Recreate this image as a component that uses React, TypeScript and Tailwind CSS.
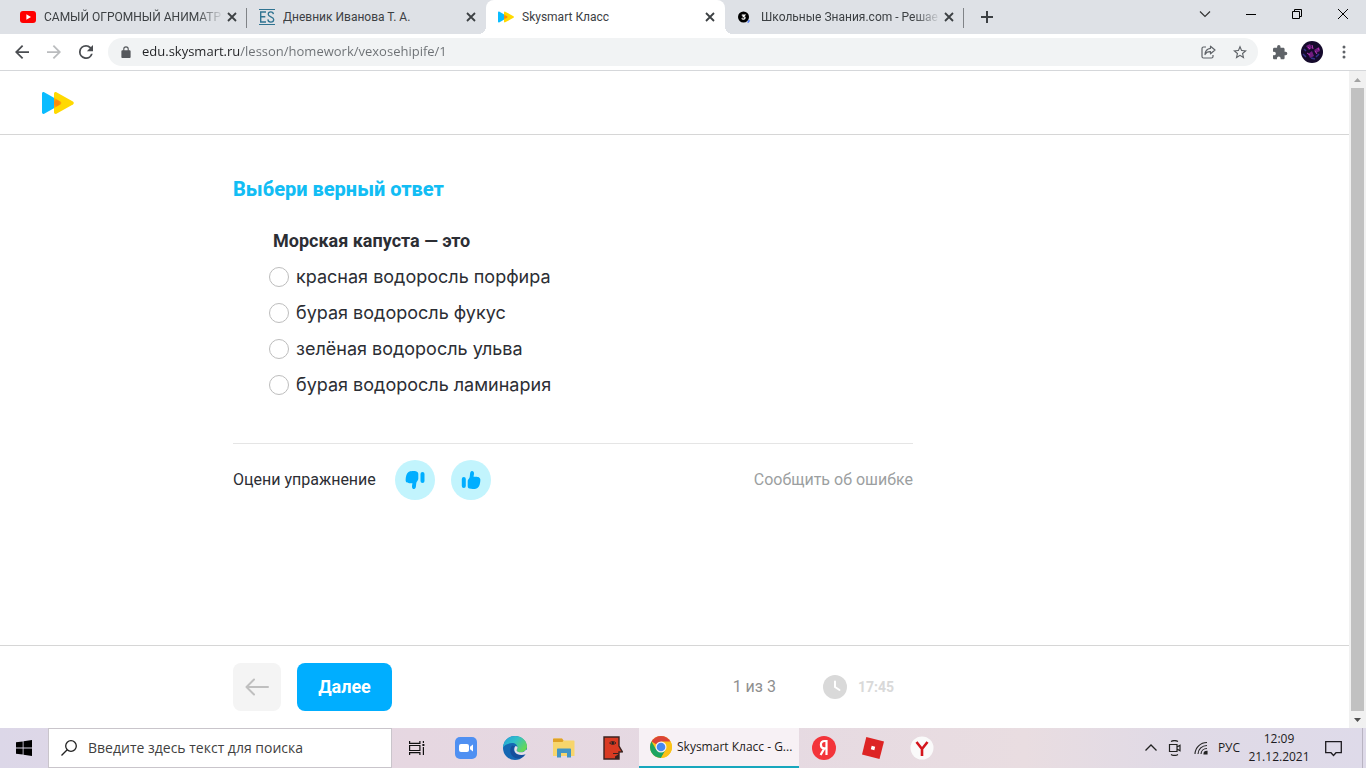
import { useState } from 'react'
import type { ReactNode } from 'react'
import { clsx } from 'clsx'

type Tab = {
  id: string
  title: string
  icon: ReactNode
  fade?: boolean
}

const answers = [
  'красная водоросль порфира',
  'бурая водоросль фукус',
  'зелёная водоросль ульва',
  'бурая водоросль ламинария',
]

function YoutubeIcon() {
  return (
    <svg viewBox="0 0 16 16" className="size-4">
      <rect y="2" width="16" height="12" rx="3" fill="#f00" />
      <path d="M6.4 5.2v5.6L11 8z" fill="#fff" />
    </svg>
  )
}

function DiaryIcon() {
  return (
    <svg viewBox="0 0 16 16" className="size-4" stroke="#2f7391" fill="none">
      <path d="M0 .5h16M0 15.5h16" />
      <path d="M7 3H1.7v10H7M1.7 7.8h4.6" strokeWidth="1.4" />
      <path d="M14.4 5.2C14.2 3.6 13.2 2.9 11.8 2.9c-1.5 0-2.6.9-2.6 2.3 0 3 5.5 2.2 5.5 5.3 0 1.6-1.2 2.6-2.9 2.6-1.7 0-2.8-.9-2.9-2.7" strokeWidth="1.3" />
    </svg>
  )
}

function SkysmartLogo({ className }: { className: string }) {
  return (
    <svg viewBox="0 0 32 22" className={className}>
      <defs>
        <radialGradient id="overlap" cx="15" cy="11" r="8" gradientUnits="userSpaceOnUse">
          <stop offset="0.25" stopColor="#f98a0c" />
          <stop offset="1" stopColor="#ffd900" />
        </radialGradient>
      </defs>
      <path d="M0 1.5C0 .3 1.2-.3 2.2.2L18.500 9.500c1.200.7 1.200 2.300 0 3L2.200 21.800C1.200 22.300 0 21.700 0 20.500z" fill="#0abcff" />
      <path d="M12 1.7C12 .4 13.300-.3 14.400.3l16.500 9.200c1.200.7 1.200 2.300 0 3L14.400 21.700C13.300 22.300 12 21.600 12 20.300z" fill="#ffd900" />
      <path d="M12 5.800l6.500 3.700c1.200.7 1.200 2.300 0 3L12 16.200z" fill="url(#overlap)" />
    </svg>
  )
}

function ZnanijaIcon() {
  return (
    <svg viewBox="0 0 16 16" className="size-4">
      <circle cx="6.500" cy="8" r="5.500" fill="#000" />
      <path d="M4.800 6.100h3L6.300 7.600c2.600 0 2.100 2.700 0 2.500-.7 0-1.200-.3-1.600-.8" fill="none" stroke="#fff" strokeWidth="1.2" />
      <path d="M11.500 10.500l1.700 1.200-1.800 2.300-1.200-.6z" fill="#5b83f0" />
    </svg>
  )
}

const tabs: Tab[] = [
  { id: 'youtube', title: 'САМЫЙ ОГРОМНЫЙ АНИМАТР', icon: <YoutubeIcon />, fade: true },
  { id: 'diary', title: 'Дневник Иванова Т. А.', icon: <DiaryIcon /> },
  { id: 'skysmart', title: 'Skysmart Класс', icon: <SkysmartLogo className="h-3 w-4" /> },
  { id: 'znanija', title: 'Школьные Знания.com - Решае', icon: <ZnanijaIcon />, fade: true },
]

function TabStrip() {
  const [active, setActive] = useState('skysmart')

  return (
    <div className="flex h-[34px] bg-[#dee1e6] pl-2 text-[#3c4043]">
      <div className="flex min-w-0">
        {tabs.map((tab, i) => {
          const isActive = tab.id === active
          const divider = !isActive && tabs[i + 1]?.id !== active
          return (
            <div
              key={tab.id}
              className={clsx(
                'relative flex w-[239px] min-w-0 items-center pr-[7px] pl-3',
                isActive && 'rounded-t-lg bg-white',
              )}
            >
              {isActive && (
                <>
                  <span className="absolute bottom-0 -left-2 size-2 bg-[radial-gradient(circle_at_0_0,#dee1e6_8px,#fff_8px)]" />
                  <span className="absolute -right-2 bottom-0 size-2 bg-[radial-gradient(circle_at_100%_0,#dee1e6_8px,#fff_8px)]" />
                </>
              )}
              <span className="flex size-4 shrink-0 items-center justify-center">{tab.icon}</span>
              <button
                onClick={() => setActive(tab.id)}
                className={clsx(
                  "ml-2 min-w-0 flex-1 overflow-hidden text-left font-['Roboto',sans-serif] text-xs whitespace-nowrap",
                  tab.fade && 'mask-r-from-85%',
                )}
              >
                {tab.title}
              </button>
              <button aria-label="Закрыть вкладку" className="flex size-4 shrink-0 items-center justify-center">
                <svg viewBox="0 0 10 10" className="size-[10px]" stroke="#3c4043" strokeWidth="1.8">
                  <path d="M1 1l8 8M9 1L1 9" />
                </svg>
              </button>
              {divider && <span className="absolute top-2 right-0 h-5 w-px bg-[#808387]" />}
            </div>
          )
        })}
      </div>
      <button aria-label="Новая вкладка" className="flex w-[46px] items-center justify-center">
        <svg viewBox="0 0 12 12" className="size-3" stroke="#3c4043" strokeWidth="2">
          <path d="M6 0v12M0 6h12" />
        </svg>
      </button>
      <div className="ml-auto flex h-7 [&>button]:flex [&>button]:w-[46px] [&>button]:items-center [&>button]:justify-center">
        <button aria-label="Поиск вкладок">
          <svg viewBox="0 0 12 12" className="size-3" fill="none" stroke="#333" strokeWidth="1.2">
            <path d="M1 3.500l5 5 5-5" />
          </svg>
        </button>
        <button aria-label="Свернуть">
          <svg viewBox="0 0 10 10" className="size-[10px]" stroke="#000">
            <path d="M0 5.500h10" />
          </svg>
        </button>
        <button aria-label="Восстановить">
          <svg viewBox="0 0 10 10" className="size-[10px]" fill="none" stroke="#000">
            <path d="M.5 2.500h7v7h-7zM2.500 2.500v-2h7v7h-2" />
          </svg>
        </button>
        <button aria-label="Закрыть">
          <svg viewBox="0 0 10 10" className="size-[10px]" stroke="#000">
            <path d="M0 0l10 10M10 0L0 10" />
          </svg>
        </button>
      </div>
    </div>
  )
}

function Toolbar() {
  return (
    <div className="flex h-[37px] items-center border-b border-[#d5d7da] bg-white px-[6px] [&_button]:flex [&_button]:w-8 [&_button]:shrink-0 [&_button]:items-center [&_button]:justify-center">
      <button aria-label="Назад">
        <svg viewBox="4 4 16 16" className="size-[14px]" fill="#4a4d51">
          <path d="M20 11H7.830l5.590-5.590L12 4l-8 8 8 8 1.410-1.410L7.830 13H20z" />
        </svg>
      </button>
      <button aria-label="Вперёд">
        <svg viewBox="4 4 16 16" className="size-[14px]" fill="#babcbe">
          <path d="M12 4l-1.410 1.410L16.170 11H4v2h12.170l-5.580 5.590L12 20l8-8z" />
        </svg>
      </button>
      <button aria-label="Обновить">
        <svg viewBox="4 4 16 16" className="size-[14px]" fill="#4a4d51">
          <path d="M17.650 6.350A7.960 7.960 0 0 0 12 4a8 8 0 1 0 7.730 10h-2.080A6 6 0 1 1 12 6c1.660 0 3.140.69 4.220 1.780L13 11h7V4z" />
        </svg>
      </button>
      <div className="ml-[6px] flex h-7 flex-1 items-center rounded-full bg-[#f1f3f4] pr-[2px] pl-[13px]">
        <svg viewBox="0 0 10 13" className="h-3 w-[10px] shrink-0" fill="#55585c">
          <path d="M1.200 4.600H2V3.300a3 3 0 0 1 6 0v1.300h.8c.7 0 1.200.5 1.200 1.200v6c0 .7-.5 1.200-1.200 1.200H1.200C.5 13 0 12.500 0 11.800v-6c0-.7.5-1.200 1.200-1.200zm2 0h3.600V3.300a1.800 1.800 0 0 0-3.600 0z" />
        </svg>
        <input
          aria-label="Адресная строка"
          defaultValue="edu.skysmart.ru/lesson/homework/vexosehipife/1"
          className="ml-[11px] min-w-0 flex-1 bg-[linear-gradient(to_right,#202124_97px,#6b6f73_97px)] bg-clip-text text-[13px] text-transparent outline-none"
        />
        <button aria-label="Поделиться">
          <svg viewBox="0 0 16 16" className="size-4" fill="none" stroke="#5f6368" strokeWidth="1.2" strokeLinejoin="round">
            <path d="M6 3H3.500C2.500 3 2 3.500 2 4.500v8c0 1 .5 1.500 1.500 1.500h8c1 0 1.500-.5 1.500-1.500V11" />
            <path d="M10.500 2.200L15 6l-4.500 3.800V7.700C7.500 7.600 6 8.600 5 10.500c.2-3.500 2-5.800 5.500-6.200z" />
          </svg>
        </button>
        <button aria-label="Добавить в закладки">
          <svg viewBox="2 2 20 19" className="size-[14px]" fill="#5f6368">
            <path d="M22 9.240l-7.190-.62L12 2 9.190 8.630 2 9.240l5.460 4.730L5.820 21 12 17.270 18.180 21l-1.630-7.030zM12 15.400l-3.760 2.270 1-4.280-3.320-2.880 4.380-.38L12 6.100l1.710 4.040 4.380.38-3.320 2.880 1 4.280z" />
          </svg>
        </button>
      </div>
      <div className="ml-[6px] flex items-center">
        <button aria-label="Расширения">
          <svg viewBox="2 1 22 22" className="size-[15px]" fill="#5f6368">
            <path d="M20.500 11H19V7c0-1.100-.9-2-2-2h-4V3.500a2.500 2.500 0 0 0-5 0V5H4c-1.100 0-2 .9-2 2v3.800h1.500a2.700 2.700 0 0 1 0 5.400H2V20c0 1.100.9 2 2 2h3.800v-1.500a2.700 2.700 0 0 1 5.400 0V22H17c1.100 0 2-.9 2-2v-4h1.500a2.500 2.500 0 0 0 0-5z" />
          </svg>
        </button>
        <button aria-label="Профиль">
          <svg viewBox="0 0 22 22" className="size-[22px] rounded-full">
            <rect width="22" height="22" fill="#150a2c" />
            <path d="M5 5l4-2 2 4-3 2zM13 9l5-3 1 4-4 2zM7 13l4-3 2 5-4 2z" fill="#701b80" />
            <path d="M7 6l2 2M11 4l1 4M14 10l2 3M6 12l3 2M17 7l1 2" stroke="#ba3bb7" />
            <path d="M2 13l3 3M10 17l4 1M15 16l3-3M3 8l2 2" stroke="#35328b" strokeWidth="1.5" />
          </svg>
        </button>
        <button aria-label="Меню">
          <svg viewBox="0 0 4 14" className="h-[14px] w-1" fill="#5f6368">
            <circle cx="2" cy="2" r="1.5" />
            <circle cx="2" cy="7" r="1.5" />
            <circle cx="2" cy="12" r="1.5" />
          </svg>
        </button>
      </div>
    </div>
  )
}

function Exercise() {
  const [answer, setAnswer] = useState<string | null>(null)

  return (
    <main className="flex-1 pt-10 pl-[233px] text-[#2c2e34]">
      <div className="max-w-[680px]">
        <h1 className="text-xl leading-7 font-extrabold text-[#12bdf4]">Выбери верный ответ</h1>
        <fieldset className="mt-6 pl-9">
          <legend className="pl-1 text-lg leading-7 font-bold">Морская капуста — это</legend>
          <div className="mt-2 flex flex-col gap-2">
            {answers.map((text) => (
              <label key={text} className="flex items-center gap-[7px] font-['Inter',sans-serif] text-lg leading-7">
                <input
                  type="radio"
                  name="answer"
                  checked={answer === text}
                  onChange={() => setAnswer(text)}
                  className="size-5 appearance-none rounded-full border border-[#bdbdbd] bg-white checked:border-[6px] checked:border-[#00aeff]"
                />
                {text}
              </label>
            ))}
          </div>
        </fieldset>
        <div className="mt-11 flex items-center border-t border-[#e5e5e5] pt-4">
          <span className="text-base">Оцени упражнение</span>
          <div className="ml-[19px] flex gap-4">
            <button aria-label="Не нравится" className="flex size-10 items-center justify-center rounded-full bg-[#c2f4fd]">
              <svg viewBox="0 0 20 20" className="size-5" fill="#00aeff">
                <path d="M4.500 1.500C6 .9 9.500.7 11.500 1.400c1.300.4 1.800 1.200 1.800 2.600v4.600c0 1.200-.5 2-1.300 2.900-.8 1-.8 2.300-1 4.200-.1 1.800-.6 3.300-2 3.300-1.500 0-2-1.200-2-2.600 0-1.300.5-2.400.4-3.100-1.700 0-4.100.3-5.500-.7C.6 11.700.5 10.600.7 9c.3-3 1-6.400 3.800-7.500z" />
                <rect x="15.500" y="2" width="4" height="11" rx="2" />
              </svg>
            </button>
            <button aria-label="Нравится" className="flex size-10 items-center justify-center rounded-full bg-[#c2f4fd]">
              <svg viewBox="0 0 20 20" className="size-5" fill="#00aeff">
                <path d="M15.500 18.500c-1.500.6-5 .8-7 .1-1.300-.4-1.800-1.200-1.800-2.600v-4.600c0-1.200.5-2 1.300-2.900.8-1 .8-2.300 1-4.200.1-1.800.6-3.300 2-3.300 1.500 0 2 1.200 2 2.600 0 1.300-.5 2.400-.4 3.100 1.700 0 4.100-.3 5.500.7 1.300.9 1.400 2 1.200 3.600-.3 3-1 6.400-3.800 7.500z" />
                <rect x=".8" y="7" width="4" height="11" rx="2" />
              </svg>
            </button>
          </div>
          <a href="#report" className="ml-auto text-base text-[#9c9fa1]">
            Сообщить об ошибке
          </a>
        </div>
      </div>
    </main>
  )
}

function LessonFooter() {
  return (
    <footer className="border-t border-[#d6d6d6] py-[17px] pl-[233px]">
      <div className="flex max-w-[661px] items-center">
        <button aria-label="Предыдущее задание" className="flex size-12 items-center justify-center rounded-lg bg-[#f4f4f4]">
          <svg viewBox="0 0 24 18" className="h-[18px] w-6" fill="none" stroke="#bfbfbf" strokeWidth="2" strokeLinecap="round" strokeLinejoin="round">
            <path d="M23 9H1.500M9 1.500L1.500 9 9 16.500" />
          </svg>
        </button>
        <button className="ml-4 h-12 w-[95px] rounded-lg bg-[#00aeff] text-lg font-bold text-white">Далее</button>
        <span className="ml-auto text-base text-[#8f8f8f]">1 из 3</span>
        <svg viewBox="0 0 24 24" className="ml-[47px] size-6">
          <circle cx="12" cy="12" r="12" fill="#d9d9d9" />
          <path d="M12 6.500V12l4.500 3" fill="none" stroke="#fff" strokeWidth="2" strokeLinecap="round" />
        </svg>
        <span className="ml-[11px] text-sm font-bold text-[#d9d9d9]">17:45</span>
      </div>
    </footer>
  )
}

function Scrollbar() {
  return (
    <div className="flex w-[17px] shrink-0 flex-col items-center bg-[#f1f1f1]">
      <svg viewBox="0 0 17 17" className="size-[17px] shrink-0">
        <path d="M5 11h7L8.500 7z" fill="#a3a3a3" />
      </svg>
      <div className="w-[13px] flex-1 bg-[#c1c1c1]" />
      <svg viewBox="0 0 17 17" className="size-[17px] shrink-0">
        <path d="M5 7h7l-3.500 4z" fill="#505050" />
      </svg>
    </div>
  )
}

function ChromeIcon() {
  return (
    <svg viewBox="0 0 24 24" className="size-[22px]">
      <circle cx="12" cy="12" r="12" fill="#fbc116" />
      <path d="M12 12L1.610 6A12 12 0 0 1 22.390 6z" fill="#db4437" />
      <path d="M1.610 6A12 12 0 0 0 12 24l5.200-9L12 12 6.800 15z" fill="#1da462" />
      <path d="M12 6h10.390A12 12 0 0 1 12 24l5.200-9z" fill="#fbc116" />
      <circle cx="12" cy="12" r="6" fill="#f6f1f4" />
      <circle cx="12" cy="12" r="4.7" fill="#4688f1" />
    </svg>
  )
}

const pinnedApps = [
  {
    name: 'Представление задач',
    icon: (
      <svg viewBox="0 0 16 16" className="size-4" fill="none" stroke="#111" strokeWidth="1.2">
        <path d="M.6 1v2.400h10.300V1M.6 15v-2.400h10.300V15M.6 5.500h10.300v5H.6zM14.400 1v2M14.400 7v8" />
        <path d="M13.400 4h2v2h-2z" fill="#111" stroke="none" />
      </svg>
    ),
  },
  {
    name: 'Zoom',
    icon: (
      <svg viewBox="0 0 22 22" className="size-[22px]">
        <rect width="22" height="22" rx="5" fill="#4f90f2" />
        <rect x="4" y="7" width="10" height="8" rx="2" fill="#fff" />
        <path d="M15 9.800L18 7.500v7l-3-2.300z" fill="#fff" />
      </svg>
    ),
  },
  {
    name: 'Edge',
    icon: (
      <svg viewBox="0 0 24 24" className="size-6">
        <defs>
          <linearGradient id="edge-top" x1="0" y1="0" x2="1" y2="0.6">
            <stop offset="0" stopColor="#229fdb" />
            <stop offset="0.5" stopColor="#31bfc9" />
            <stop offset="1" stopColor="#65d857" />
          </linearGradient>
        </defs>
        <circle cx="12" cy="12" r="12" fill="#1568b3" />
        <path d="M0 11.500C.5 4.700 5.600 0 12 0c7 0 12 5 12 10.300 0 3.500-2.700 6-6.100 6-2.400 0-4.300-1-4.300-2.100 0-.7.9-1 .9-2.800 0-2.300-2.300-4.400-5.400-4.400C5.500 7 1.600 9 0 11.500z" fill="url(#edge-top)" />
        <path d="M9.200 9.500C6.500 12.300 6.600 17.500 10 20.500c2 2 5.500 2.500 8.300 1.200 2-.9 3.400-2.400 4.200-3.800-3.500 1.900-8.500 1.600-10.800-1.500-1.700-2.300-1.400-4.600 0-6.200z" fill="#164f9c" />
        <path d="M14.500 11.400c0 1.800-.9 2.100-.9 2.800 0 1.100 1.900 2.100 4.300 2.100 2.200 0 4-.9 5.100-2.600h1.200c0 1.700-.6 3.300-1.600 4.500-3.900 1.300-8.600.8-10.500-2-1.400-2.200-1-4.500.4-6.100.8.200 2.100.4 2.100 1.300z" fill="#e7dfe8" />
      </svg>
    ),
  },
  {
    name: 'Проводник',
    icon: (
      <svg viewBox="0 0 24 20" className="h-5 w-6">
        <path d="M1 1.500C1 .7 1.500.5 2 .5h8l1.500 2h10c.7 0 1 .4 1 1V18H1z" fill="#f7d56c" />
        <path d="M1 1.500C1 .7 1.500.5 2 .5h8l1.500 2-1 1.500H1z" fill="#dfa126" />
        <path d="M5 19.500v-8c0-.6.4-1 1-1h12c.6 0 1 .4 1 1v8h-4v-4.500H9v4.500z" fill="#4295c4" />
      </svg>
    ),
  },
  {
    name: 'Лицо',
    icon: (
      <svg viewBox="0 0 20 24" className="h-6 w-5">
        <path d="M1 1h15v9l3.300 5.800-3.300.2V23H1z" fill="#d93a22" stroke="#3b2320" strokeWidth="1.4" />
        <path d="M6.500 7c2-2 4.500-2 6.500 0-2 1.800-4.500 1.800-6.500 0zM10 17.500h5.500" fill="none" stroke="#3b2320" />
        <circle cx="9.800" cy="7" r="1.200" fill="#222" />
        <path d="M12 20.500l4-2.500v5h-4z" fill="#3b2320" />
      </svg>
    ),
  },
]

const runningApps = [
  {
    name: 'Яндекс',
    icon: (
      <svg viewBox="0 0 24 24" className="size-6">
        <circle cx="12" cy="12" r="12" fill="#f3343a" />
        <path d="M14.500 19V5h-1.800c-2.600 0-3.800 1.500-3.800 3.800 0 2.200 1.300 3.600 3.500 3.600h2M12.300 12.400L8.600 19" fill="none" stroke="#fff" strokeWidth="2.2" />
      </svg>
    ),
  },
  {
    name: 'Roblox',
    icon: (
      <svg viewBox="0 0 24 24" className="size-6">
        <path d="M5.300 1L23 5.500 18.500 23 1 18.500z" fill="#dd2424" />
        <path d="M10.700 9.800l3.500.9-.9 3.500-3.500-.9z" fill="#fff" />
      </svg>
    ),
  },
  {
    name: 'Яндекс Браузер',
    icon: (
      <svg viewBox="0 0 24 24" className="size-6">
        <circle cx="12" cy="12" r="11.5" fill="#fafafa" />
        <path d="M6.500 6l5.500 7 5.500-7M12 12.500V20" fill="none" stroke="#d4151c" strokeWidth="2.6" />
      </svg>
    ),
  },
]

function Taskbar() {
  return (
    <div className="flex h-10 shrink-0 items-stretch bg-[linear-gradient(to_right,#dcd7e8,#e6d7e1_30%,#e5d9e2_52%,#e9dde1_75%,#e0dae6_86%,#dedae9)] font-['Open_Sans',sans-serif] text-[#1d1b20]">
      <button aria-label="Пуск" className="flex w-12 items-center justify-center">
        <svg viewBox="0 0 16 16" className="size-4" fill="#000">
          <path d="M0 2.300l6.700-.9v6.200H0zM7.500 1.300L16 0v7.600H7.500zM0 8.400h6.700v6.200L0 13.700zM7.500 8.400H16V16l-8.500-1.200z" />
        </svg>
      </button>
      <label className="flex w-[344px] items-center border border-[#c9c5cb] bg-white pl-3">
        <svg viewBox="0 0 16 16" className="size-4 shrink-0" fill="none" stroke="#222" strokeWidth="1.3">
          <circle cx="10" cy="6" r="5.3" />
          <path d="M6.200 9.800L.5 15.500" />
        </svg>
        <input
          aria-label="Поиск"
          placeholder="Введите здесь текст для поиска"
          className="ml-[11px] min-w-0 flex-1 text-sm outline-none placeholder:text-[#3f3f3f]"
        />
      </label>
      {pinnedApps.map((app) => (
        <button key={app.name} aria-label={app.name} className="flex w-[49px] items-center justify-center">
          {app.icon}
        </button>
      ))}
      <button className="ml-[2px] flex w-40 items-center gap-[5px] border-b-2 border-[#17a7bd] bg-[#f7f1f5] pl-[11px] text-xs whitespace-nowrap">
        <ChromeIcon />
        Skysmart Класс - G...
      </button>
      {runningApps.map((app) => (
        <button key={app.name} aria-label={app.name} className="flex w-[49px] items-center justify-center">
          {app.icon}
        </button>
      ))}
      <div className="ml-auto flex items-center text-xs">
        <button aria-label="Скрытые значки" className="flex w-6 justify-center">
          <svg viewBox="0 0 12 12" className="size-3" fill="none" stroke="#222" strokeWidth="1.3">
            <path d="M.5 8.500L6 3l5.500 5.500" />
          </svg>
        </button>
        <button aria-label="Камера" className="flex w-6 justify-center">
          <svg viewBox="0 0 14 16" className="h-4 w-[14px]" fill="none" stroke="#222" strokeWidth="1.2">
            <path d="M3 1.500C5 .4 8 .4 10 1.500M3 14.500c2 1.100 5 1.100 7 0M1.500 4.500H9v7H1.500zM9 7l3-1.700v5.400L9 9" />
          </svg>
        </button>
        <button aria-label="Сеть" className="flex w-7 justify-center">
          <svg viewBox="0 0 14 14" className="size-[14px]" fill="none" stroke="#222" strokeWidth="1.1">
            <path d="M1 13C1.200 6.500 6.500 1.500 13 1.500M4 13c.2-4.800 4-8.500 9-8.500M7 13c.1-3.200 2.600-5.500 6-5.500" />
            <path d="M10 13c0-1.600 1.300-2.600 3-2.600V13z" fill="#222" />
          </svg>
        </button>
        <button className="w-7">РУС</button>
        <div className="ml-1 w-16 text-center leading-[18px]">
          <div>12:09</div>
          <div>21.12.2021</div>
        </div>
        <button aria-label="Уведомления" className="ml-[14px] flex w-[17px] justify-center">
          <svg viewBox="0 0 17 17" className="size-[17px]" fill="none" stroke="#1d1b20" strokeWidth="1.3">
            <path d="M.7 1.700h15.600v11H11L8.500 15.500 6 12.700H.7z" />
          </svg>
        </button>
        <div className="ml-5 h-10 w-1 border-l border-[#b9b4c2]" />
      </div>
    </div>
  )
}

export default function App() {
  return (
    <div className="flex h-screen flex-col overflow-hidden bg-white">
      <div className="shrink-0 font-['Open_Sans',sans-serif]">
        <TabStrip />
        <Toolbar />
      </div>
      <div className="flex min-h-0 flex-1">
        <div className="flex min-w-0 flex-1 flex-col font-['Roboto',sans-serif]">
          <header className="flex h-16 items-center border-b border-[#d6d6d6] pl-[42px]">
            <a href="#home" aria-label="Skysmart">
              <SkysmartLogo className="h-[22px] w-8" />
            </a>
          </header>
          <Exercise />
          <LessonFooter />
        </div>
        <Scrollbar />
      </div>
      <Taskbar />
    </div>
  )
}
